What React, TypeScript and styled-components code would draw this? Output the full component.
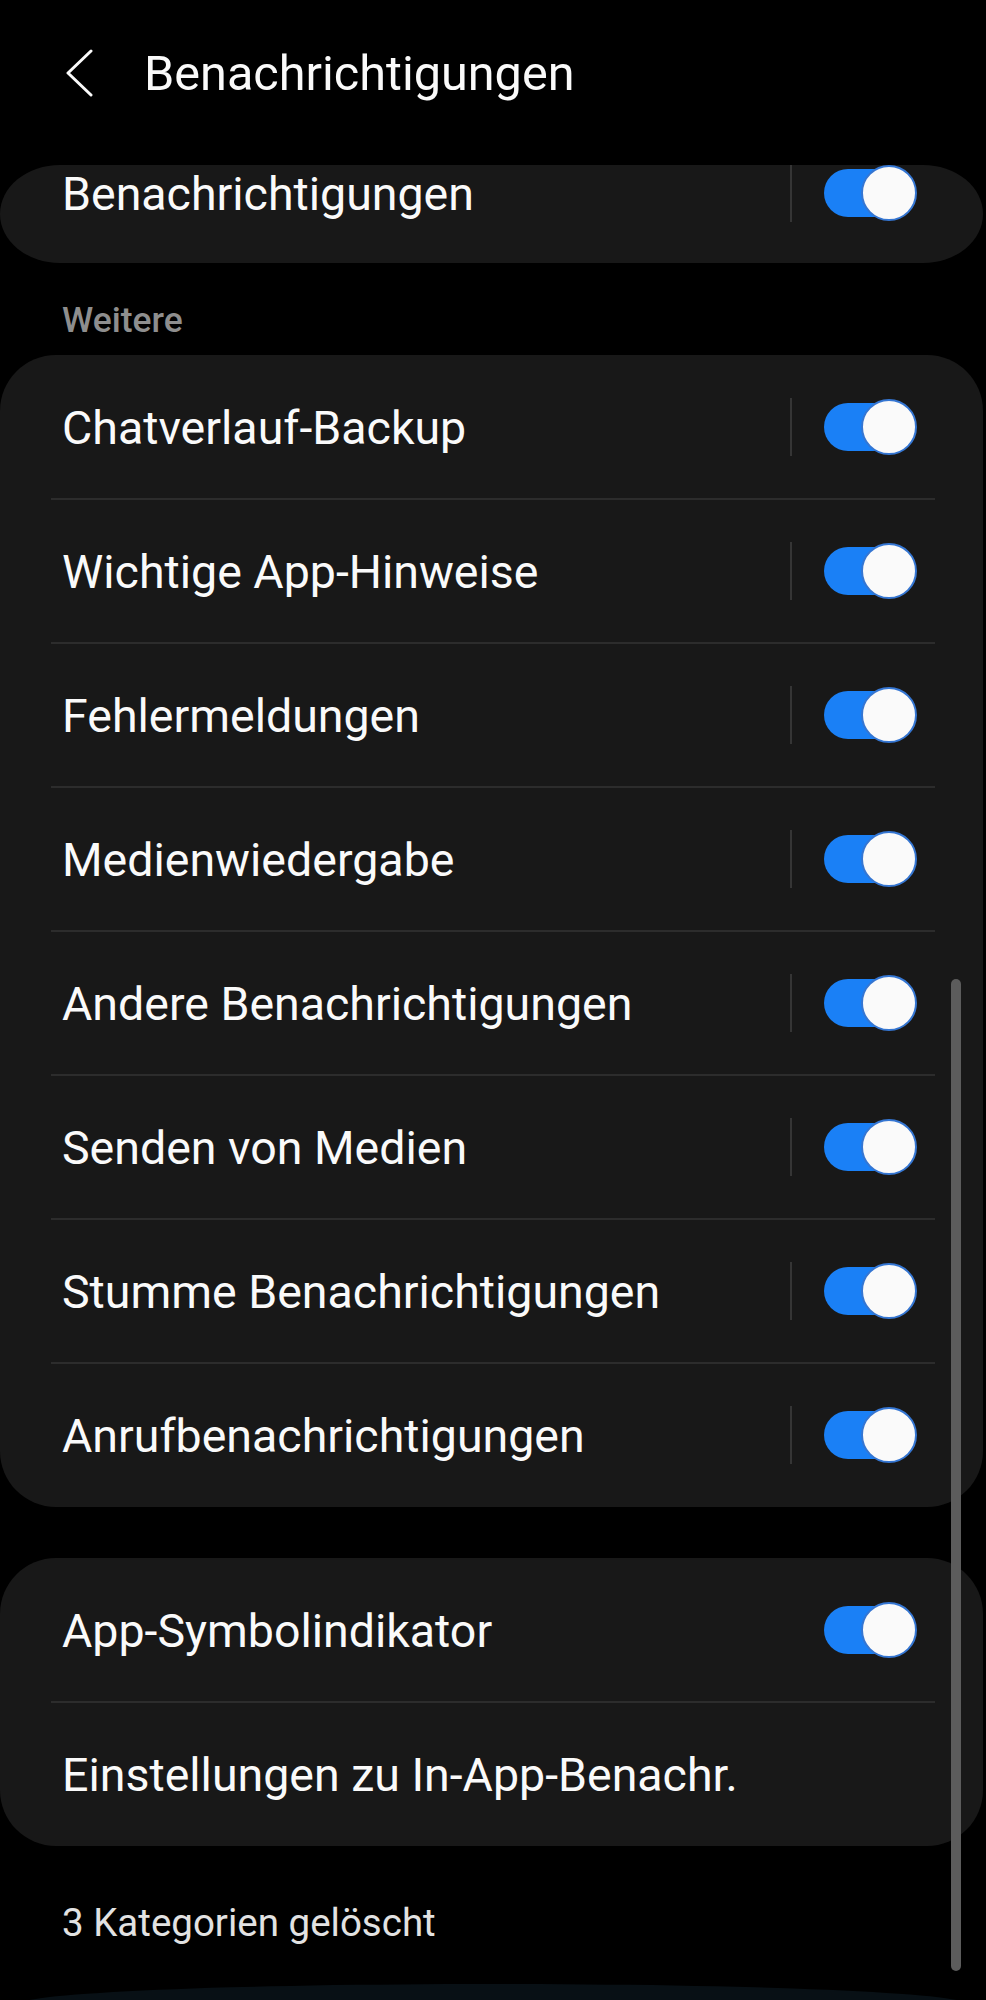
import React from "react";
import styled, { createGlobalStyle } from "styled-components";

const Global = createGlobalStyle`
  html, body { margin: 0; padding: 0; background: #000; }
  body { font-family: Roboto, "Noto Sans", "Liberation Sans", sans-serif; color: #fafafa; }
  * { box-sizing: border-box; }
`;

const Page = styled.div`
  position: relative;
  width: 986px;
  height: 2000px;
  background: #000;
  overflow: hidden;
`;

const Header = styled.header`
  height: 148px;
  display: flex;
  align-items: center;
  padding-left: 66px;
  gap: 50px;
`;

const Title = styled.h1`
  margin: 0;
  font-size: 48.6px;
  font-weight: 400;
  line-height: 56px;
  color: #fafafa;
`;

const Card = styled.section<{ $clipped?: boolean }>`
  margin: 0 3px 0 0;
  background: #181818;
  border-radius: ${(p) => (p.$clipped ? "60px / 49px" : "56px")};
  overflow: hidden;
  display: flex;
  flex-direction: column;
`;

const TopCard = styled(Card)`
  margin-top: 17px;
  height: 98px;
`;

const Row = styled.div<{ $h?: number }>`
  position: relative;
  height: ${(p) => p.$h ?? 144}px;
  display: flex;
  align-items: center;
  padding: 0 66px 0 62px;
  &:not(:first-child)::before {
    content: "";
    position: absolute;
    top: -1px;
    left: 51px;
    right: 48px;
    height: 2px;
    background: #2c2c2c;
  }
`;

const Label = styled.span`
  flex: 1;
  font-size: 46.5px;
  line-height: 56px;
  font-weight: 400;
  color: #fafafa;
  white-space: nowrap;
  padding-top: 2px;
`;

const Sep = styled.span`
  width: 2px;
  height: 58px;
  background: #353535;
  margin-right: 32px;
`;

const Track = styled.span`
  position: relative;
  width: 93px;
  height: 56px;
  display: flex;
  align-items: center;
`;

const TrackBar = styled.span`
  width: 84px;
  height: 48px;
  border-radius: 24px;
  background: #1a80f6;
`;

const Thumb = styled.span`
  position: absolute;
  right: 0;
  top: 0;
  width: 56px;
  height: 56px;
  border-radius: 50%;
  background: #fafafa;
  border: 2.5px solid #3576d2;
`;

const SectionTitle = styled.div`
  margin: 37px 0 15px 62px;
  font-size: 35.5px;
  font-weight: 500;
  line-height: 40px;
  color: #8e8e8e;
`;

const Gap = styled.div<{ $h: number }>`
  height: ${(p) => p.$h}px;
`;

const Footer = styled.div`
  margin: 57px 0 0 62px;
  font-size: 38.5px;
  line-height: 40px;
  color: #e2e2e2;
`;

const Scrollbar = styled.div`
  position: absolute;
  left: 951px;
  top: 979px;
  width: 10px;
  height: 992px;
  border-radius: 5px;
  background: #5c5c5c;
`;

const NavGlow = styled.div`
  position: absolute;
  left: 20px;
  right: 20px;
  bottom: -24px;
  height: 40px;
  border-radius: 50%;
  background: #081015;
`;

const Toggle = () => (
  <Track>
    <TrackBar />
    <Thumb />
  </Track>
);

const Back = () => (
  <svg width="28" height="50" viewBox="0 0 28 50" fill="none">
    <path d="M25 2 L2 24 L25 46" stroke="#fafafa" strokeWidth="3" strokeLinecap="round" strokeLinejoin="round" />
  </svg>
);

const items = [
  "Chatverlauf-Backup",
  "Wichtige App-Hinweise",
  "Fehlermeldungen",
  "Medienwiedergabe",
  "Andere Benachrichtigungen",
  "Senden von Medien",
  "Stumme Benachrichtigungen",
  "Anrufbenachrichtigungen",
];

export default function App() {
  return (
    <Page>
      <Global />
      <Header>
        <Back />
        <Title>Benachrichtigungen</Title>
      </Header>
      <TopCard $clipped>
        <Row $h={56}>
          <Label>Benachrichtigungen</Label>
          <Sep />
          <Toggle />
        </Row>
      </TopCard>
      <SectionTitle>Weitere</SectionTitle>
      <Card>
        {items.map((t) => (
          <Row key={t}>
            <Label>{t}</Label>
            <Sep />
            <Toggle />
          </Row>
        ))}
      </Card>
      <Gap $h={51} />
      <Card>
        <Row>
          <Label>App-Symbolindikator</Label>
          <Toggle />
        </Row>
        <Row>
          <Label>Einstellungen zu In-App-Benachr.</Label>
        </Row>
      </Card>
      <Footer>3 Kategorien gelöscht</Footer>
      <Scrollbar />
      <NavGlow />
    </Page>
  );
}
